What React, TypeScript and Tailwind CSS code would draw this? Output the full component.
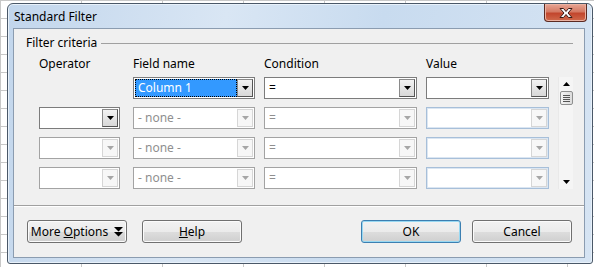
import type { ReactNode } from "react"

const FONT = { fontFamily: '"Noto Sans", "Liberation Sans", sans-serif' }

function Arrow({ disabled }: { disabled?: boolean }) {
  return (
    <svg width="7" height="4" viewBox="0 0 7 4">
      <path d="M0 0h7L3.5 4z" fill={disabled ? "#a6a6a6" : "#000"} />
    </svg>
  )
}

interface ComboProps {
  width: number
  text?: string
  disabled?: boolean
  selected?: boolean
  blue?: boolean
}

function Combo({ width, text, disabled, selected, blue }: ComboProps) {
  const border = blue
    ? "border-[#a7bfd9] shadow-[inset_0_0_0_1px_#dbe6f2]"
    : disabled
      ? "border-[#a3a3a3]"
      : "border-[#7c7c7c]"
  return (
    <div style={{ width }} className={`h-[22px] flex items-stretch bg-white border ${border} p-[1px]`}>
      <div className="flex-1 min-w-0 flex items-center">
        {selected ? (
          <div className="h-full w-full bg-[#3399ff] border border-dotted border-black text-white flex items-center pl-[2px] text-[12px]">
            {text}
          </div>
        ) : (
          <span className={`pl-[3px] text-[12px] ${disabled ? "text-[#8f8f8f]" : "text-black"}`}>{text}</span>
        )}
      </div>
      <div
        className={`w-[16px] flex items-center justify-center border ${
          disabled
            ? "border-[#d6d6d6] bg-[#f7f7f7]"
            : "border-[#8a8a8a] border-r-[#555] border-b-[#555] bg-[linear-gradient(to_bottom,#f2f2f2,#d8d8d8)]"
        }`}
      >
        <Arrow disabled={disabled} />
      </div>
    </div>
  )
}

function Button({ children, isDefault, width = 100 }: { children: ReactNode; isDefault?: boolean; width?: number }) {
  return (
    <div
      style={{ width }}
      className={`h-[23px] rounded-[3px] border flex items-center justify-center whitespace-nowrap text-[12px] text-black ${
        isDefault
          ? "border-[#3c7fb1] shadow-[inset_0_0_0_1px_#98d8f2]"
          : "border-[#707070] shadow-[inset_0_0_0_1px_#fbfbfb]"
      } bg-[linear-gradient(to_bottom,#f2f2f2_0%,#ebebeb_50%,#dddddd_51%,#cfcfcf_100%)]`}
    >
      {children}
    </div>
  )
}

function Row({ children }: { children: ReactNode }) {
  return <div className="flex items-center h-[22px]">{children}</div>
}

export default function App() {
  return (
    <div
      style={FONT}
      className="w-[594px] h-[267px] overflow-hidden bg-white bg-[linear-gradient(to_right,#c8c8c8_1px,transparent_1px),linear-gradient(to_bottom,#c8c8c8_1px,transparent_1px)] bg-[size:81px_18px] pt-[3px] pl-[7px]"
    >
      {/* window frame */}
      <div className="w-[586px] h-[261px] rounded-t-[6px] rounded-b-[3px] border border-[#4a5868] bg-[linear-gradient(100deg,#c2d6ec_0%,#d9e6f4_35%,#c8dbef_60%,#d6e4f3_100%)] shadow-[inset_0_0_0_1px_#e8f1fa] flex flex-col">
        {/* title bar */}
        <div className="h-[24px] flex items-start shrink-0">
          <div className="pl-[6px] pt-[5px] text-[12px] text-black leading-[16px]">Standard Filter</div>
          <div className="ml-auto mr-[5px] w-[43px] h-[18px] rounded-b-[4px] border border-t-0 border-[#5b2a22] bg-[linear-gradient(to_bottom,#e8a594_0%,#d47a64_45%,#c2462d_55%,#d06a4c_100%)] shadow-[inset_0_0_0_1px_#eab2a2] flex items-center justify-center">
            <svg width="16" height="12" viewBox="0 0 16 12">
              <path
                d="M2 1.5h3.5L8 4.5l2.5-3H14L10 6l4 4.5h-3.5L8 7.5l-2.5 3H2L6 6z"
                fill="#fff"
                stroke="#3b1a14"
                strokeWidth="1"
                strokeLinejoin="round"
              />
            </svg>
          </div>
        </div>

        {/* client area */}
        <div className="ml-[5px] w-[572px] h-[230px] bg-[#f0f0f0] border border-[#8b9cb0] flex flex-col">
          {/* Filter criteria heading */}
          <div className="flex items-center h-[16px] mt-[6px] pl-[12px] pr-[11px]">
            <span className="text-[12px] text-black leading-[16px]">Filter criteria</span>
            <div className="flex-1 ml-[4px] h-px bg-[#a0a0a0]" />
          </div>

          {/* column headers */}
          <div className="flex items-center h-[16px] mt-[5px] text-[12px] text-black leading-[16px]">
            <span className="ml-[25px] w-[94px]">Operator</span>
            <span className="w-[131px]">Field name</span>
            <span className="w-[162px]">Condition</span>
            <span>Value</span>
          </div>

          <div className="flex mt-[5px]">
            {/* rows */}
            <div className="flex flex-col gap-[8px] ml-[25px]">
              <Row>
                <div className="w-[81px]" />
                <div className="ml-[13px]">
                  <Combo width={122} text="Column 1" selected />
                </div>
                <div className="ml-[9px]">
                  <Combo width={153} text="=" />
                </div>
                <div className="ml-[9px]">
                  <Combo width={123} />
                </div>
              </Row>
              <Row>
                <Combo width={81} />
                <div className="ml-[13px]">
                  <Combo width={122} text="- none -" disabled />
                </div>
                <div className="ml-[9px]">
                  <Combo width={153} text="=" disabled />
                </div>
                <div className="ml-[9px]">
                  <Combo width={123} disabled blue />
                </div>
              </Row>
              <Row>
                <Combo width={81} disabled />
                <div className="ml-[13px]">
                  <Combo width={122} text="- none -" disabled />
                </div>
                <div className="ml-[9px]">
                  <Combo width={153} text="=" disabled />
                </div>
                <div className="ml-[9px]">
                  <Combo width={123} disabled blue />
                </div>
              </Row>
              <Row>
                <Combo width={81} disabled />
                <div className="ml-[13px]">
                  <Combo width={122} text="- none -" disabled />
                </div>
                <div className="ml-[9px]">
                  <Combo width={153} text="=" disabled />
                </div>
                <div className="ml-[9px]">
                  <Combo width={123} disabled blue />
                </div>
              </Row>
            </div>

            {/* scrollbar */}
            <div className="ml-[9px] w-[15px] h-[112px] bg-[#f5f5f5] border-l border-[#e9e9e9] flex flex-col items-center">
              <div className="h-[14px] flex items-center justify-center">
                <svg width="7" height="4" viewBox="0 0 7 4">
                  <path d="M0 4h7L3.5 0z" fill="#000" />
                </svg>
              </div>
              <div className="w-[13px] h-[14px] rounded-[2px] border border-[#8e8f8f] bg-[linear-gradient(to_right,#f3f3f3,#dcdcdc)] flex flex-col items-center justify-center gap-[1px]">
                <div className="w-[7px] h-px bg-[#555]" />
                <div className="w-[7px] h-px bg-[#555]" />
                <div className="w-[7px] h-px bg-[#555]" />
                <div className="w-[7px] h-px bg-[#555]" />
              </div>
              <div className="flex-1" />
              <div className="h-[14px] flex items-center justify-center">
                <svg width="7" height="4" viewBox="0 0 7 4">
                  <path d="M0 0h7L3.5 4z" fill="#000" />
                </svg>
              </div>
            </div>
          </div>

          {/* separator */}
          <div className="mt-[16px] h-px bg-[#a0a0a0] border-b border-white box-content" />

          {/* buttons */}
          <div className="flex items-center mt-[13px] pl-[13px]">
            <Button>
              <span className="mr-[6px]">
                More <span className="underline">O</span>ptions
              </span>
              <svg width="9" height="10" viewBox="0 0 9 10">
                <path d="M0 0h9L4.5 4.5z M0 5h9L4.5 9.5z" fill="#000" />
              </svg>
            </Button>
            <div className="ml-[15px]">
              <Button>
                <span>
                  <span className="underline">H</span>elp
                </span>
              </Button>
            </div>
            <div className="ml-auto">
              <Button isDefault>OK</Button>
            </div>
            <div className="ml-[11px] mr-[12px]">
              <Button>Cancel</Button>
            </div>
          </div>
        </div>
      </div>
    </div>
  )
}
